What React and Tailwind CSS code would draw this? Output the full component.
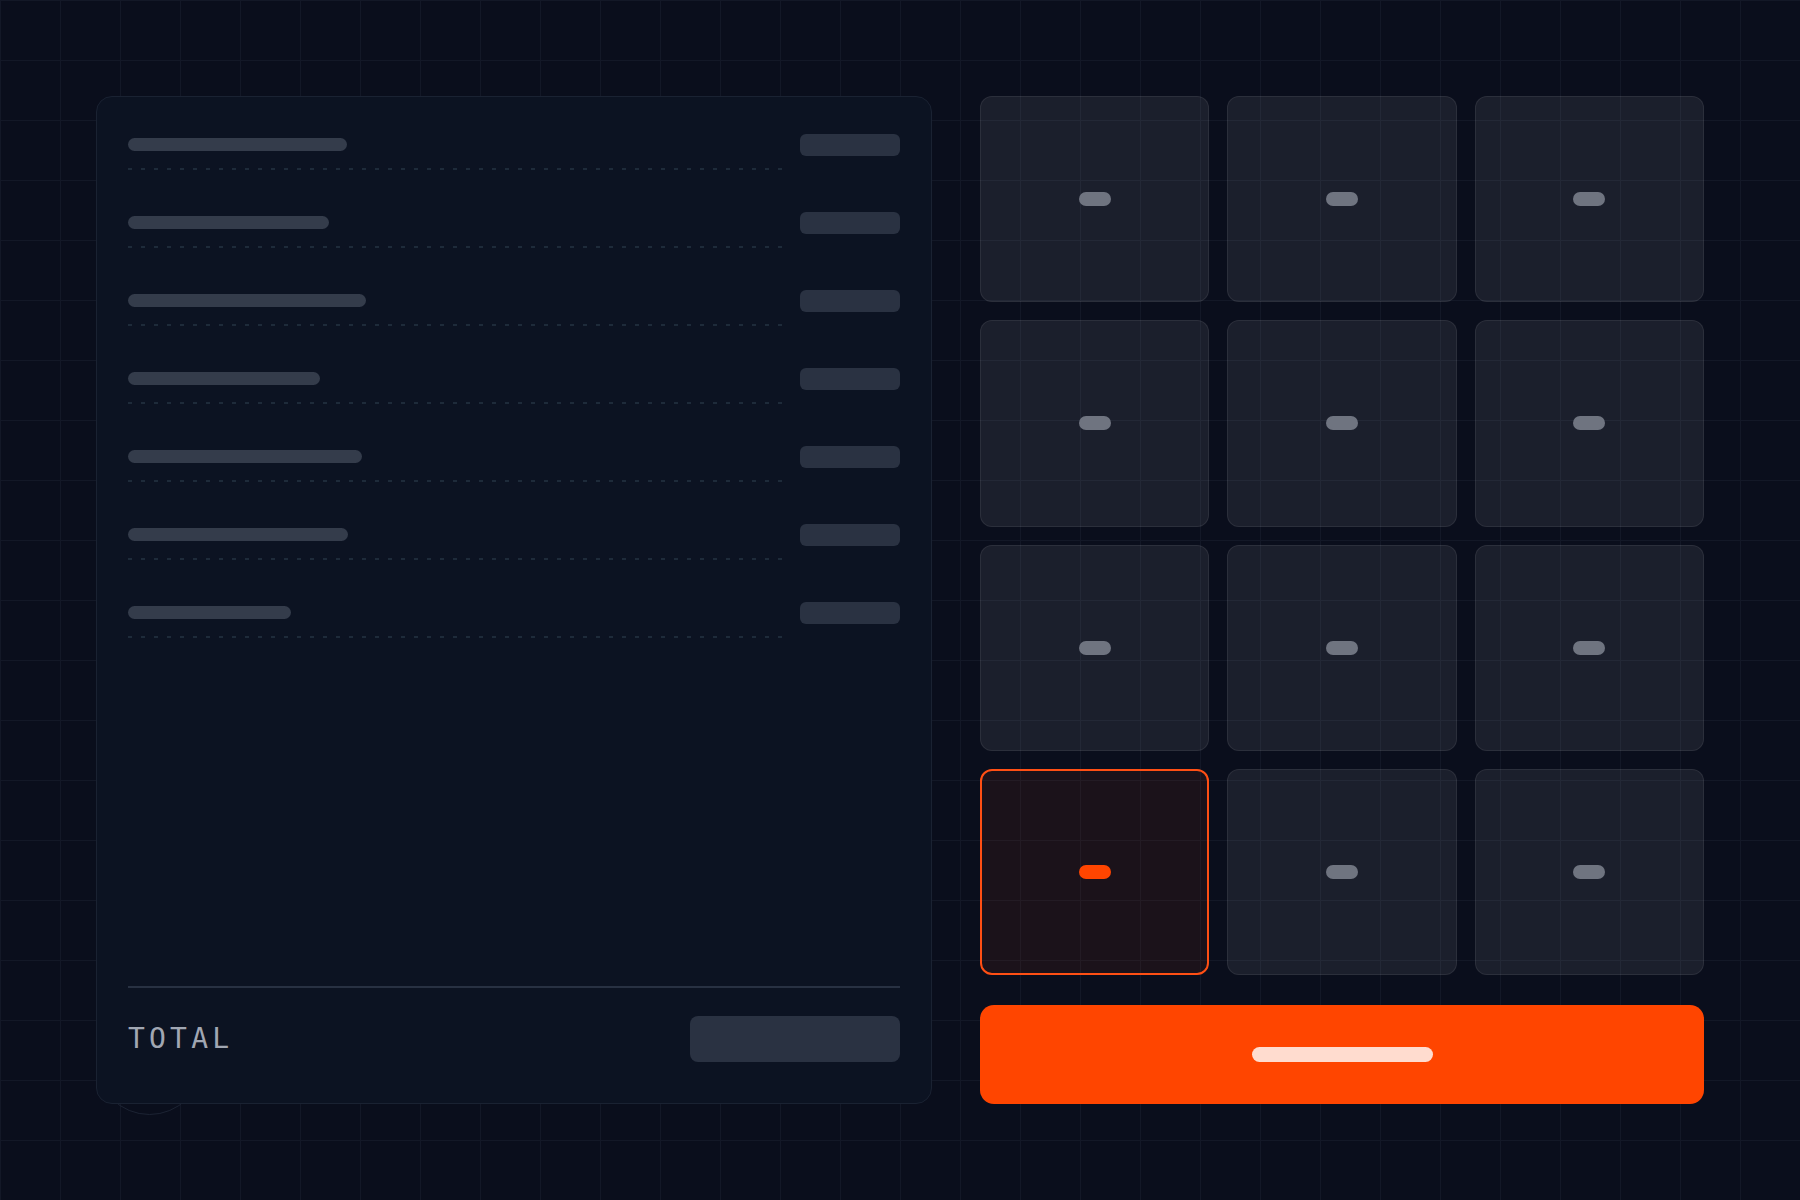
const rows = [219, 201, 238, 192, 234, 220, 163];

const tiles = Array.from({ length: 12 }, (_, i) => i);
const SELECTED = 9;

const LineItem = ({ width }) => (
  <div className="flex h-[78px] gap-[18px]">
    <div className="flex flex-1 flex-col">
      <div className="mt-[10px] h-[13px] rounded-full bg-[#343c4b]" style={{ width }} />
      <div className="mt-[17px] h-[2px] bg-[repeating-linear-gradient(to_right,#1e2b3a_0px,#1e2b3a_4px,transparent_4px,transparent_13px)]" />
    </div>
    <div className="mt-[6px] h-[22px] w-[100px] rounded-md bg-[#2a3242]" />
  </div>
);

const Tile = ({ active }) => (
  <button
    className={
      active
        ? "flex items-center justify-center rounded-xl border-2 border-[#ff4f14] bg-[#ff4500]/[0.07]"
        : "flex items-center justify-center rounded-xl border border-white/[0.07] bg-white/[0.07]"
    }
  >
    <span className={active ? "h-[14px] w-[32px] rounded-full bg-[#ff4500]" : "h-[14px] w-[32px] rounded-full bg-[#6f7480]"} />
  </button>
);

export default function App() {
  return (
    <div className="flex h-[1200px] gap-12 overflow-hidden bg-[#0a0e1c] bg-[linear-gradient(to_right,#131827_1px,transparent_1px),linear-gradient(to_bottom,#131827_1px,transparent_1px)] bg-[size:60px_60px] p-24 font-['DejaVu_Sans_Mono',monospace]">
      {/* receipt */}
      <div className="relative w-[836px]">
        <div className="absolute bottom-[-11px] left-0 h-[107px] w-[107px] rounded-full border border-[#1c2333]" />
        <div className="relative z-10 flex h-full flex-col rounded-2xl border border-[#1a2232] bg-[#0c1322] px-[31px] pt-[31px]">
          {rows.map((w, i) => (
            <LineItem key={i} width={w} />
          ))}
          <div className="flex-1" />
          <div className="h-[2px] bg-[#283142]" />
          <div className="mt-[28px] mb-[41px] flex h-[46px] items-center justify-between">
            <span className="text-[28px] leading-none tracking-[0.15em] text-[#a1a7b3]">TOTAL</span>
            <div className="h-[46px] w-[210px] rounded-lg bg-[#2a3242]" />
          </div>
        </div>
      </div>

      {/* keypad */}
      <div className="flex flex-1 flex-col">
        <div className="grid flex-1 grid-cols-3 grid-rows-4 gap-[18px]">
          {tiles.map((i) => (
            <Tile key={i} active={i === SELECTED} />
          ))}
        </div>
        <button className="mt-[30px] flex h-[99px] shrink-0 items-center justify-center rounded-[14px] bg-[#ff4500]">
          <span className="h-[15px] w-[181px] rounded-full bg-[#ffdccf]" />
        </button>
      </div>
    </div>
  );
}
